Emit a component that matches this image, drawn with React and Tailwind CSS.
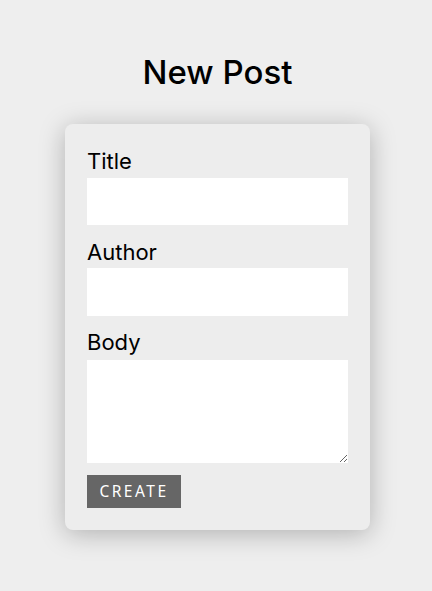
export default function App() {
  return (
    <div className="min-h-[591px] w-full bg-[#eeeeee] flex flex-col items-center pl-[3px]" style={{ fontFamily: "Inter, 'Noto Sans', sans-serif" }}>
      <h1 className="mt-[48px] text-[33px] leading-[48px] font-medium text-black">New Post</h1>
      <form className="mt-[28px] w-[305px] bg-[#ededed] rounded-[8px] shadow-[0_4px_26px_rgba(0,0,0,0.26)] px-[22px] pt-[23px] pb-[22px] flex flex-col" onSubmit={(e) => e.preventDefault()}>
        <label className="block text-[22px] leading-[28px] text-black">Title</label>
        <input className="mt-[3px] h-[47px] w-[261px] bg-white outline-none border-0" />
        <label className="block mt-[13px] text-[22px] leading-[28px] text-black">Author</label>
        <input className="mt-[2px] h-[48px] w-[261px] bg-white outline-none border-0" />
        <label className="block mt-[12px] text-[22px] leading-[28px] text-black">Body</label>
        <textarea className="mt-[4px] h-[103px] w-[261px] bg-white outline-none border-0 block" />
        <button type="submit" className="mt-[12px] h-[33px] w-[94px] bg-[#666666] text-white text-[15.5px] tracking-[2.5px] font-normal" style={{ fontFamily: "'Noto Sans', sans-serif" }}>CREATE</button>
      </form>
    </div>
  );
}
